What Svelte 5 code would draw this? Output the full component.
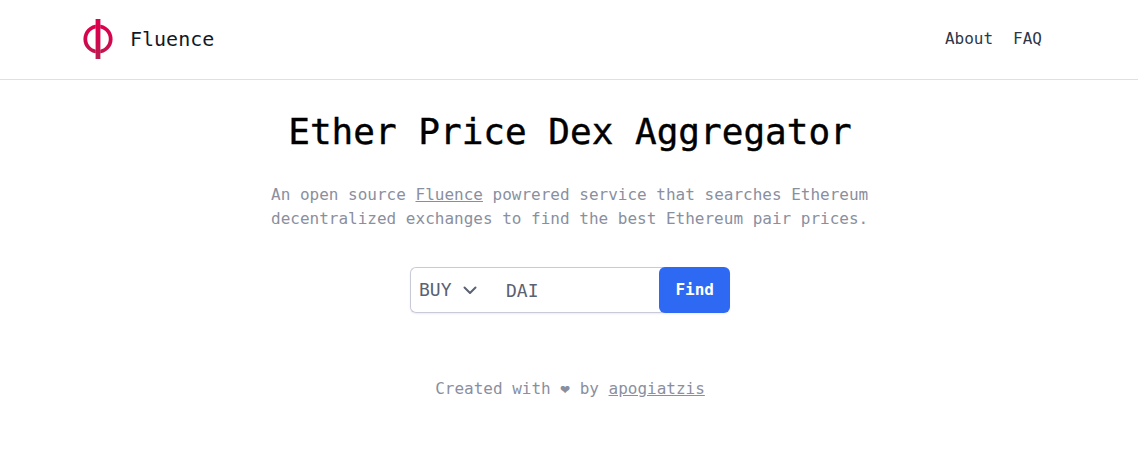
<script>
  let side = $state('BUY');
  let token = $state('DAI');
</script>

<div class="page">
  <header>
    <div class="bar">
      <a class="brand" href="#home">
        <svg class="logo" viewBox="0 0 32 40" aria-hidden="true">
          <defs>
            <linearGradient id="ink" gradientUnits="userSpaceOnUse" x1="0" y1="0" x2="0" y2="40">
              <stop offset="0" stop-color="#e0004d" />
              <stop offset="0.5" stop-color="#d2054d" />
              <stop offset="1" stop-color="#b81f50" />
            </linearGradient>
          </defs>
          <circle cx="16" cy="20" r="12.7" fill="none" stroke="url(#ink)" stroke-width="3.8" />
          <path d="M13.2 0h5.6v40h-5.6z" fill="#fff" opacity="0.3" />
          <path d="M13.6 0h4.8v40h-4.8z" fill="url(#ink)" />
        </svg>
        <span>Fluence</span>
      </a>
      <nav>
        <a href="#about">About</a>
        <a href="#faq">FAQ</a>
      </nav>
    </div>
  </header>
  <main>
    <h1>Ether Price Dex Aggregator</h1>
    <p class="intro">
      An open source <a href="#fluence">Fluence</a> powrered service that searches Ethereum decentralized exchanges to find the best Ethereum pair prices.
    </p>
    <form onsubmit={(e) => e.preventDefault()}>
      <div class="select">
        <select aria-label="Side" bind:value={side}>
          <option>BUY</option>
          <option>SELL</option>
        </select>
        <svg viewBox="0 0 20 20" aria-hidden="true"><path d="M4.5 7.5l5.5 5.5 5.5-5.5" /></svg>
      </div>
      <input type="text" aria-label="Token" bind:value={token} />
      <button type="submit">Find</button>
    </form>
    <footer>Created with <span>❤</span> by <a href="#author">apogiatzis</a></footer>
  </main>
</div>

<style>
  :global(body) { margin: 0; background: #fff; }
  .page { font-family: "DejaVu Sans Mono", monospace; font-size: 16px; line-height: 24px; color: #2d3748; }
  a { color: inherit; }
  header { border-bottom: 1px solid #e0e0e0; }
  .bar { max-width: 1024px; margin: 0 auto; padding: 19px 39px 20px 25px; box-sizing: border-box; display: flex; justify-content: space-between; align-items: center; }
  .brand { display: flex; align-items: center; gap: 16px; font-size: 20px; text-decoration: none; color: #111827; }
  .logo { width: 32px; height: 40px; }
  nav { display: flex; gap: 20px; }
  nav a { text-decoration: none; }
  main { display: flex; flex-direction: column; align-items: center; padding: 25px 16px 24px 18px; }
  h1 { margin: 0; font-size: 36px; line-height: 54px; font-weight: 400; color: #000; text-align: center; -webkit-text-stroke: 0.4px #000; }
  .intro { margin: 24px 0 36px; max-width: 598px; color: #8a8fa0; }
  form { display: flex; width: 100%; max-width: 320px; border-radius: 6px; box-shadow: 0 1px 2px rgba(0, 0, 0, 0.08); }
  .select { position: relative; width: 88px; }
  select, input { display: block; height: 46px; box-sizing: border-box; font: inherit; font-size: 18px; color: #5a6272; background: #fff; border: 1px solid #c8cad8; margin: 0; }
  select { appearance: none; width: 100%; padding: 0 8px; border-right: 0; border-radius: 6px 0 0 6px; }
  .select svg { position: absolute; right: 18px; top: 13px; width: 20px; height: 20px; fill: none; stroke: #5a6272; stroke-width: 2; stroke-linecap: round; stroke-linejoin: round; pointer-events: none; }
  input { flex: 1; min-width: 0; padding: 0 8px; border-left: 0; border-right: 0; }
  button { position: relative; margin: 0 0 0 -8px; padding: 0 16px; border: 0; border-radius: 6px; background: #2e69f4; color: #fff; font: inherit; font-weight: 700; }
  footer { margin-top: 64px; text-align: center; color: #8a8fa0; }
</style>
